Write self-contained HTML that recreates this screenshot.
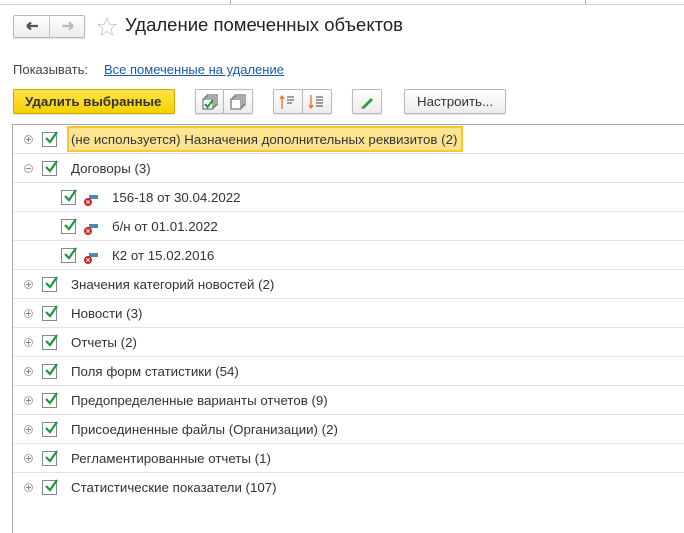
<!DOCTYPE html>
<html><head><meta charset="utf-8"><style>
*{box-sizing:border-box;margin:0;padding:0}
body{width:684px;height:533px;background:#fff;font-family:"Liberation Sans",Arial,sans-serif;font-size:13px;color:#333;position:relative;overflow:hidden}
.a{position:absolute}
.btn{position:absolute;border:1px solid #b9b9b9;border-radius:2px;background:linear-gradient(#fff,#ececec);box-shadow:0 1px 1px rgba(0,0,0,.12)}
.row{position:absolute;left:13px;width:671px;height:29px;border-bottom:1px solid #e3e3e3}
.row span{position:absolute;top:7px;font-size:13.3px;color:#333}
.cb{position:absolute;width:15px;height:15px;border:1px solid #888;background:#fff;top:7px}
.cb svg{position:absolute;left:1px;top:-3px}
.exp{position:absolute;left:11px;top:10px;width:9px;height:9px;border:1px solid #aaa;border-radius:50%}
.exp:before{content:"";position:absolute;left:1px;top:3px;width:5px;height:1px;background:#888}
.exp.p:after{content:"";position:absolute;left:3px;top:1px;width:1px;height:5px;background:#888}
</style></head><body>
<div class="a" style="left:0;top:4px;width:684px;height:1px;background:#cfcfcf"></div>
<div class="a" style="left:230px;top:0;width:1px;height:4px;background:#aaa"></div>
<div class="a" style="left:585px;top:0;width:1px;height:4px;background:#aaa"></div>
<div class="btn" style="left:13px;top:15px;width:72px;height:23px"></div>
<div class="a" style="left:49px;top:16px;width:1px;height:21px;background:#c5c5c5"></div>
<svg class="a" style="left:25px;top:20px" width="16" height="12"><path d="M2 6H13M2 6L6 2.5M2 6L6 9.5" stroke="#555" stroke-width="2.2" fill="none"/></svg>
<svg class="a" style="left:60px;top:20px" width="16" height="12"><path d="M2 6H13M13 6L9 2.5M13 6L9 9.5" stroke="#bbb" stroke-width="2.2" fill="none"/></svg>
<svg class="a" style="left:97px;top:17px" width="20" height="19"><path d="M10 1L12.6 7.2L19 7.6L14 11.8L15.6 18L10 14.5L4.4 18L6 11.8L1 7.6L7.4 7.2Z" fill="none" stroke="#ccc" stroke-width="1"/></svg>
<div class="a" style="left:125px;top:14px;font-size:18.5px;color:#222">Удаление помеченных объектов</div>
<div class="a" style="left:13px;top:62px;font-size:13px;color:#444">Показывать:</div>
<div class="a" style="left:104px;top:62px;font-size:13px;color:#1b5aa8;text-decoration:underline">Все помеченные на удаление</div>
<div class="btn" style="left:13px;top:89px;width:162px;height:25px;background:linear-gradient(#ffe34a,#f5d100);border-color:#c9aa00"></div>
<div class="a" style="left:25px;top:94px;font-size:13.3px;font-weight:bold;color:#333">Удалить выбранные</div>
<div class="btn" style="left:195px;top:89px;width:29px;height:25px"></div>
<div class="btn" style="left:223px;top:89px;width:30px;height:25px"></div>
<svg class="a" style="left:201px;top:94px" width="18" height="16"><rect x="6" y="1" width="10" height="10" fill="#fff" stroke="#555"/><rect x="4" y="3" width="10" height="10" fill="#fff" stroke="#555"/><rect x="2" y="5" width="10" height="10" fill="#fff" stroke="#555"/><path d="M4 10L6.5 13L12 6" stroke="#1a9a3a" stroke-width="2" fill="none"/></svg>
<svg class="a" style="left:229px;top:94px" width="18" height="16"><rect x="6" y="1" width="10" height="10" fill="#fff" stroke="#555"/><rect x="4" y="3" width="10" height="10" fill="#fff" stroke="#555"/><rect x="2" y="5" width="10" height="10" fill="#fff" stroke="#555"/></svg>
<div class="btn" style="left:273px;top:89px;width:30px;height:25px"></div>
<div class="btn" style="left:302px;top:89px;width:30px;height:25px"></div>
<svg class="a" style="left:279px;top:94px" width="18" height="16"><path d="M3 15V2M1 5L3 2L5 5" stroke="#f07020" stroke-width="1.3" fill="none"/><path d="M8 3H15M8 6H15M8 9H13" stroke="#444"/></svg>
<svg class="a" style="left:308px;top:94px" width="18" height="16"><path d="M3 1V14M1 11L3 14L5 11" stroke="#f07020" stroke-width="1.3" fill="none"/><path d="M8 3H15M8 6H15M8 9H15M8 12H15" stroke="#444"/></svg>
<div class="btn" style="left:352px;top:89px;width:30px;height:25px"></div>
<svg class="a" style="left:358px;top:94px" width="18" height="16"><path d="M4 13L13 4L15 6L6 15Z" fill="#2a9d3a"/><path d="M3 12L3 15L6 15Z" fill="#e0a060"/></svg>
<div class="btn" style="left:404px;top:89px;width:102px;height:25px"></div>
<div class="a" style="left:417px;top:94px;font-size:13.3px;color:#333">Настроить...</div>
<div class="a" style="left:12px;top:124px;width:672px;height:409px;border-left:1px solid #aaa;border-top:1px solid #aaa"></div>

<div class="row" style="top:125px"><div class="exp p"></div><div class="cb" style="left:29px"><svg width="15" height="15"><path d="M2 8L6 12L13 2" stroke="#1a9a3a" stroke-width="2.2" fill="none"/></svg></div><div class="a" style="left:54px;top:1px;width:396px;height:26px;background:#fde58f;border:2px solid #f7c635"></div><span style="left:58px">(не используется) Назначения дополнительных реквизитов (2)</span></div>
<div class="row" style="top:154px"><div class="exp"></div><div class="cb" style="left:29px"><svg width="15" height="15"><path d="M2 8L6 12L13 2" stroke="#1a9a3a" stroke-width="2.2" fill="none"/></svg></div><span style="left:58px">Договоры (3)</span></div>

<div class="row" style="top:183px"><div class="cb" style="left:48px"><svg width="15" height="15"><path d="M2 8L6 12L13 2" stroke="#1a9a3a" stroke-width="2.2" fill="none"/></svg></div><svg class="a" style="left:70px;top:10px" width="16" height="14"><rect x="6" y="2" width="9" height="4" fill="#4a88b8"/><circle cx="5" cy="9" r="4" fill="#d42020"/><path d="M3.3 7.3L6.7 10.7M6.7 7.3L3.3 10.7" stroke="#fff" stroke-width="1"/></svg><span style="left:99px">156-18 от 30.04.2022</span></div>
<div class="row" style="top:212px"><div class="cb" style="left:48px"><svg width="15" height="15"><path d="M2 8L6 12L13 2" stroke="#1a9a3a" stroke-width="2.2" fill="none"/></svg></div><svg class="a" style="left:70px;top:10px" width="16" height="14"><rect x="6" y="2" width="9" height="4" fill="#4a88b8"/><circle cx="5" cy="9" r="4" fill="#d42020"/><path d="M3.3 7.3L6.7 10.7M6.7 7.3L3.3 10.7" stroke="#fff" stroke-width="1"/></svg><span style="left:99px">б/н от 01.01.2022</span></div>
<div class="row" style="top:241px"><div class="cb" style="left:48px"><svg width="15" height="15"><path d="M2 8L6 12L13 2" stroke="#1a9a3a" stroke-width="2.2" fill="none"/></svg></div><svg class="a" style="left:70px;top:10px" width="16" height="14"><rect x="6" y="2" width="9" height="4" fill="#4a88b8"/><circle cx="5" cy="9" r="4" fill="#d42020"/><path d="M3.3 7.3L6.7 10.7M6.7 7.3L3.3 10.7" stroke="#fff" stroke-width="1"/></svg><span style="left:99px">К2 от 15.02.2016</span></div>

<div class="row" style="top:270px"><div class="exp p"></div><div class="cb" style="left:29px"><svg width="15" height="15"><path d="M2 8L6 12L13 2" stroke="#1a9a3a" stroke-width="2.2" fill="none"/></svg></div><span style="left:58px">Значения категорий новостей (2)</span></div>
<div class="row" style="top:299px"><div class="exp p"></div><div class="cb" style="left:29px"><svg width="15" height="15"><path d="M2 8L6 12L13 2" stroke="#1a9a3a" stroke-width="2.2" fill="none"/></svg></div><span style="left:58px">Новости (3)</span></div>
<div class="row" style="top:328px"><div class="exp p"></div><div class="cb" style="left:29px"><svg width="15" height="15"><path d="M2 8L6 12L13 2" stroke="#1a9a3a" stroke-width="2.2" fill="none"/></svg></div><span style="left:58px">Отчеты (2)</span></div>
<div class="row" style="top:357px"><div class="exp p"></div><div class="cb" style="left:29px"><svg width="15" height="15"><path d="M2 8L6 12L13 2" stroke="#1a9a3a" stroke-width="2.2" fill="none"/></svg></div><span style="left:58px">Поля форм статистики (54)</span></div>
<div class="row" style="top:386px"><div class="exp p"></div><div class="cb" style="left:29px"><svg width="15" height="15"><path d="M2 8L6 12L13 2" stroke="#1a9a3a" stroke-width="2.2" fill="none"/></svg></div><span style="left:58px">Предопределенные варианты отчетов (9)</span></div>
<div class="row" style="top:415px"><div class="exp p"></div><div class="cb" style="left:29px"><svg width="15" height="15"><path d="M2 8L6 12L13 2" stroke="#1a9a3a" stroke-width="2.2" fill="none"/></svg></div><span style="left:58px">Присоединенные файлы (Организации) (2)</span></div>
<div class="row" style="top:444px"><div class="exp p"></div><div class="cb" style="left:29px"><svg width="15" height="15"><path d="M2 8L6 12L13 2" stroke="#1a9a3a" stroke-width="2.2" fill="none"/></svg></div><span style="left:58px">Регламентированные отчеты (1)</span></div>
<div class="row" style="top:473px;border-bottom:none"><div class="exp p"></div><div class="cb" style="left:29px"><svg width="15" height="15"><path d="M2 8L6 12L13 2" stroke="#1a9a3a" stroke-width="2.2" fill="none"/></svg></div><span style="left:58px">Статистические показатели (107)</span></div>
</body></html>
